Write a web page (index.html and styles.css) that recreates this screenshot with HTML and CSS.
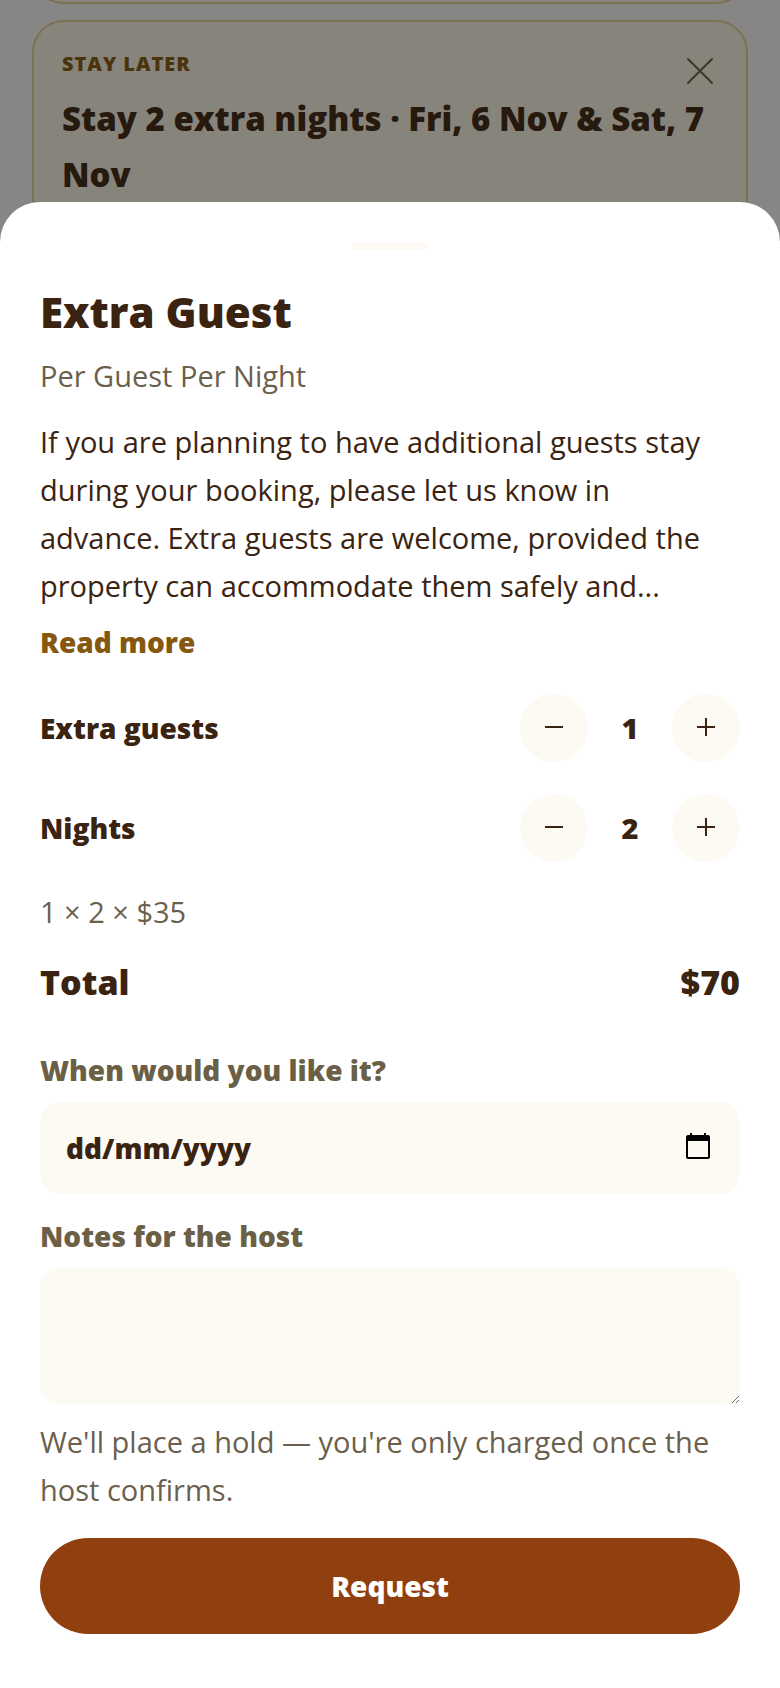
FILE: index.html
```html
<!DOCTYPE html>
<html lang="en">
<head>
  <meta charset="UTF-8">
  <meta name="viewport" content="width=device-width, initial-scale=1.0">
  <title>Extra Guest</title>
  <link rel="stylesheet" href="styles.css">
</head>
<body>
  <main class="offers">
    <div class="offer offer-previous"></div>
    <article class="offer">
      <div class="offer-head">
        <p class="offer-label">Stay later</p>
        <button class="offer-close" type="button" aria-label="Dismiss">
          <svg width="28" height="28" viewBox="0 0 28 28" fill="none" stroke="currentColor" stroke-width="2" stroke-linecap="round">
            <path d="M2 2l24 24M26 2L2 26"/>
          </svg>
        </button>
      </div>
      <h2 class="offer-title">Stay 2 extra nights · Fri, 6 Nov &amp; Sat, 7 Nov</h2>
    </article>
  </main>

  <div class="overlay">
    <form class="sheet" role="dialog" aria-labelledby="sheet-title">
      <div class="handle"></div>
      <h1 class="title" id="sheet-title">Extra Guest</h1>
      <p class="unit">Per Guest Per Night</p>
      <p class="description">If you are planning to have additional guests stay during your booking, please let us know in advance. Extra guests are welcome, provided the property can accommodate them safely and...</p>
      <button class="read-more" type="button">Read more</button>

      <div class="row">
        <span class="row-label" id="guests-label">Extra guests</span>
        <div class="stepper" role="group" aria-labelledby="guests-label">
          <button class="step" type="button" data-step="-1" aria-label="Fewer guests">
            <svg width="20" height="20" viewBox="0 0 20 20" stroke="currentColor" stroke-width="2"><path d="M1 9h18"/></svg>
          </button>
          <output class="count" id="guests">1</output>
          <button class="step" type="button" data-step="1" aria-label="More guests">
            <svg width="20" height="20" viewBox="0 0 20 20" stroke="currentColor" stroke-width="2"><path d="M1 9h18M10 0v18"/></svg>
          </button>
        </div>
      </div>
      <div class="row">
        <span class="row-label" id="nights-label">Nights</span>
        <div class="stepper" role="group" aria-labelledby="nights-label">
          <button class="step" type="button" data-step="-1" aria-label="Fewer nights">
            <svg width="20" height="20" viewBox="0 0 20 20" stroke="currentColor" stroke-width="2"><path d="M1 9h18"/></svg>
          </button>
          <output class="count" id="nights">2</output>
          <button class="step" type="button" data-step="1" aria-label="More nights">
            <svg width="20" height="20" viewBox="0 0 20 20" stroke="currentColor" stroke-width="2"><path d="M1 9h18M10 0v18"/></svg>
          </button>
        </div>
      </div>

      <p class="sum" id="sum">1 × 2 × $35</p>
      <div class="total">
        <span>Total</span>
        <span id="total">$70</span>
      </div>

      <label class="label" for="date">When would you like it?</label>
      <div class="date">
        <input class="date-input" id="date" type="text" inputmode="numeric" placeholder="dd/mm/yyyy">
        <button class="date-button" type="button" aria-label="Open calendar">
          <svg width="32" height="32" viewBox="0 0 32 32">
            <path fill="currentColor" fill-rule="evenodd" d="M8 1h2v2h12V1h2v2h2a2 2 0 0 1 2 2v20a2 2 0 0 1-2 2H6a2 2 0 0 1-2-2V5a2 2 0 0 1 2-2h2zM6 9v16h20V9z"/>
          </svg>
        </button>
      </div>

      <label class="label" for="notes">Notes for the host</label>
      <textarea class="notes" id="notes"></textarea>

      <p class="hint">We'll place a hold — you're only charged once the host confirms.</p>
      <button class="request" type="submit">Request</button>
    </form>
  </div>

<script>
  const price = 35;
  const guests = document.querySelector('#guests');
  const nights = document.querySelector('#nights');

  document.querySelector('.sheet').addEventListener('click', ev => {
    const step = ev.target.closest('.step');
    if (!step) return;
    const count = step.parentNode.querySelector('.count');
    count.textContent = Math.max(1, Number(count.textContent) + Number(step.dataset.step));
    document.querySelector('#sum').textContent = `${guests.textContent} × ${nights.textContent} × $${price}`;
    document.querySelector('#total').textContent = '$' + guests.textContent * nights.textContent * price;
  });
</script>
</body>
</html>
```
FILE: styles.css
```css
* {
  box-sizing: border-box;
}
body, h1, h2, p {
  margin: 0;
}
body {
  height: 100vh;
  overflow: hidden;
  background: #fff;
  color: #3a2411;
  font-family: "Open Sans", sans-serif;
  font-size: 29px;
  line-height: 48px;
}
button, input, textarea {
  margin: 0;
  padding: 0;
  border: 0;
  background: none;
  color: inherit;
  font: inherit;
}
button {
  cursor: pointer;
}
svg {
  display: block;
}

/* offers behind the sheet */
.offers {
  display: flex;
  flex-direction: column;
  gap: 16px;
  padding: 0 32px;
}
.offer {
  padding: 28px;
  border: 2px solid #e8d5a0;
  border-radius: 32px;
  background: #fdfaec;
}
.offer-previous {
  height: 64px;
  margin-top: -60px;
}
.offer-head {
  display: flex;
  justify-content: space-between;
  align-items: flex-start;
}
.offer-label {
  color: #85580f;
  font-size: 20px;
  font-weight: 800;
  line-height: 28px;
  letter-spacing: 1px;
  text-transform: uppercase;
}
.offer-close {
  padding: 7px 4px 0;
  color: #6b5f45;
}
.offer-title {
  margin-top: 6px;
  font-size: 33px;
  font-weight: 800;
  line-height: 56px;
}

/* bottom sheet */
.overlay {
  position: fixed;
  inset: 0;
  display: flex;
  flex-direction: column;
  justify-content: flex-end;
  background: rgba(18, 14, 10, .5);
}
.sheet {
  display: flex;
  flex-direction: column;
  padding: 40px 40px 54px;
  border-radius: 40px 40px 0 0;
  background: #fff;
}
.handle {
  align-self: center;
  width: 76px;
  height: 8px;
  border-radius: 4px;
  background: #fdfaf3;
}
.title {
  margin-top: 32px;
  font-size: 42px;
  font-weight: 800;
  line-height: 60px;
}
.unit {
  margin-top: 10px;
  color: #6b5f4d;
}
.description {
  margin-top: 18px;
  padding-right: 12px;
}
.read-more {
  align-self: flex-start;
  margin-top: 8px;
  color: #85580f;
  font-size: 28px;
  font-weight: 800;
}
.row {
  display: flex;
  justify-content: space-between;
  align-items: center;
  margin-top: 32px;
}
.read-more + .row {
  margin-top: 28px;
}
.row-label {
  font-size: 28px;
  font-weight: 800;
}
.stepper {
  display: flex;
  align-items: center;
}
.step {
  display: flex;
  justify-content: center;
  align-items: center;
  width: 68px;
  height: 68px;
  border-radius: 50%;
  background: #fdfaf3;
}
.count {
  width: 84px;
  font-weight: 800;
  text-align: center;
}
.sum {
  margin-top: 26px;
  color: #6b5f4d;
}
.total {
  display: flex;
  justify-content: space-between;
  margin-top: 18px;
  font-size: 34px;
  font-weight: 800;
  line-height: 56px;
}
.label {
  margin-top: 18px;
  color: #6b5f45;
  font-size: 28px;
  font-weight: 800;
}
.total + .label {
  margin-top: 36px;
}
.date {
  display: flex;
  align-items: center;
  height: 92px;
  margin-top: 8px;
  padding: 0 26px;
  border-radius: 20px;
  background: #fdfaf3;
}
.date-input {
  flex: 1;
  min-width: 0;
  font-size: 28px;
  font-weight: 800;
}
.date-input::placeholder {
  color: inherit;
  opacity: 1;
}
.date-button {
  color: #000;
}
.notes {
  height: 136px;
  margin-top: 8px;
  padding: 20px 26px;
  border-radius: 20px;
  background: #fdfaf3;
  resize: vertical;
}
.hint {
  margin-top: 14px;
  color: #6b5f4d;
}
.request {
  height: 96px;
  margin-top: 24px;
  border-radius: 48px;
  background: #903f0f;
  color: #fff;
  font-size: 28px;
  font-weight: 800;
}
```
